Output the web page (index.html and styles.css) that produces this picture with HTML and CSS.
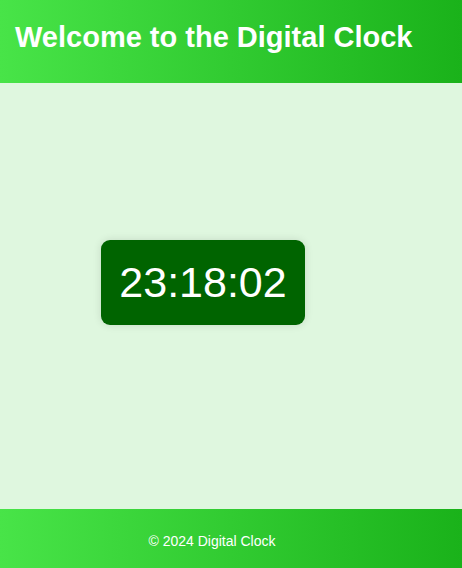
FILE: index.html
```html
<!DOCTYPE html>
<html lang="en">
<head>
<meta charset="utf-8">
<meta name="viewport" content="width=device-width, initial-scale=1">
<title>Digital Clock</title>
<link rel="stylesheet" href="styles.css">
</head>
<body>
<header class="header">
  <h1 class="title">Welcome to the Digital Clock</h1>
</header>
<main class="main">
  <time class="clock">23:18:02</time>
</main>
<footer class="footer">
  <p class="copyright">© 2024 Digital Clock</p>
</footer>
</body>
</html>
```

FILE: styles.css
```css
* {
  box-sizing: border-box;
}

body {
  margin: 0;
  min-height: 100vh;
  display: flex;
  flex-direction: column;
  background: #dff7df;
  color: #fff;
  font-family: Arial, "Liberation Sans", sans-serif;
}

.header,
.footer {
  background: linear-gradient(to right, #48e448, #1ab21a);
}

.header {
  padding: 21px 15px 29px;
}

.title {
  margin: 0;
  font-size: 29px;
  line-height: 33px;
}

.main {
  flex: 1;
  display: flex;
  align-items: center;
  justify-content: center;
  padding: 0 56px 28px 0;
}

.clock {
  padding: 18px;
  border-radius: 9px;
  background: #006400;
  box-shadow: 0 0 9px rgba(0, 0, 0, 0.12);
  font-size: 43px;
  line-height: 49px;
}

.footer {
  padding: 24px 38px 19px 0;
  text-align: center;
}

.copyright {
  margin: 0;
  font-size: 14px;
  line-height: 16px;
}
```
